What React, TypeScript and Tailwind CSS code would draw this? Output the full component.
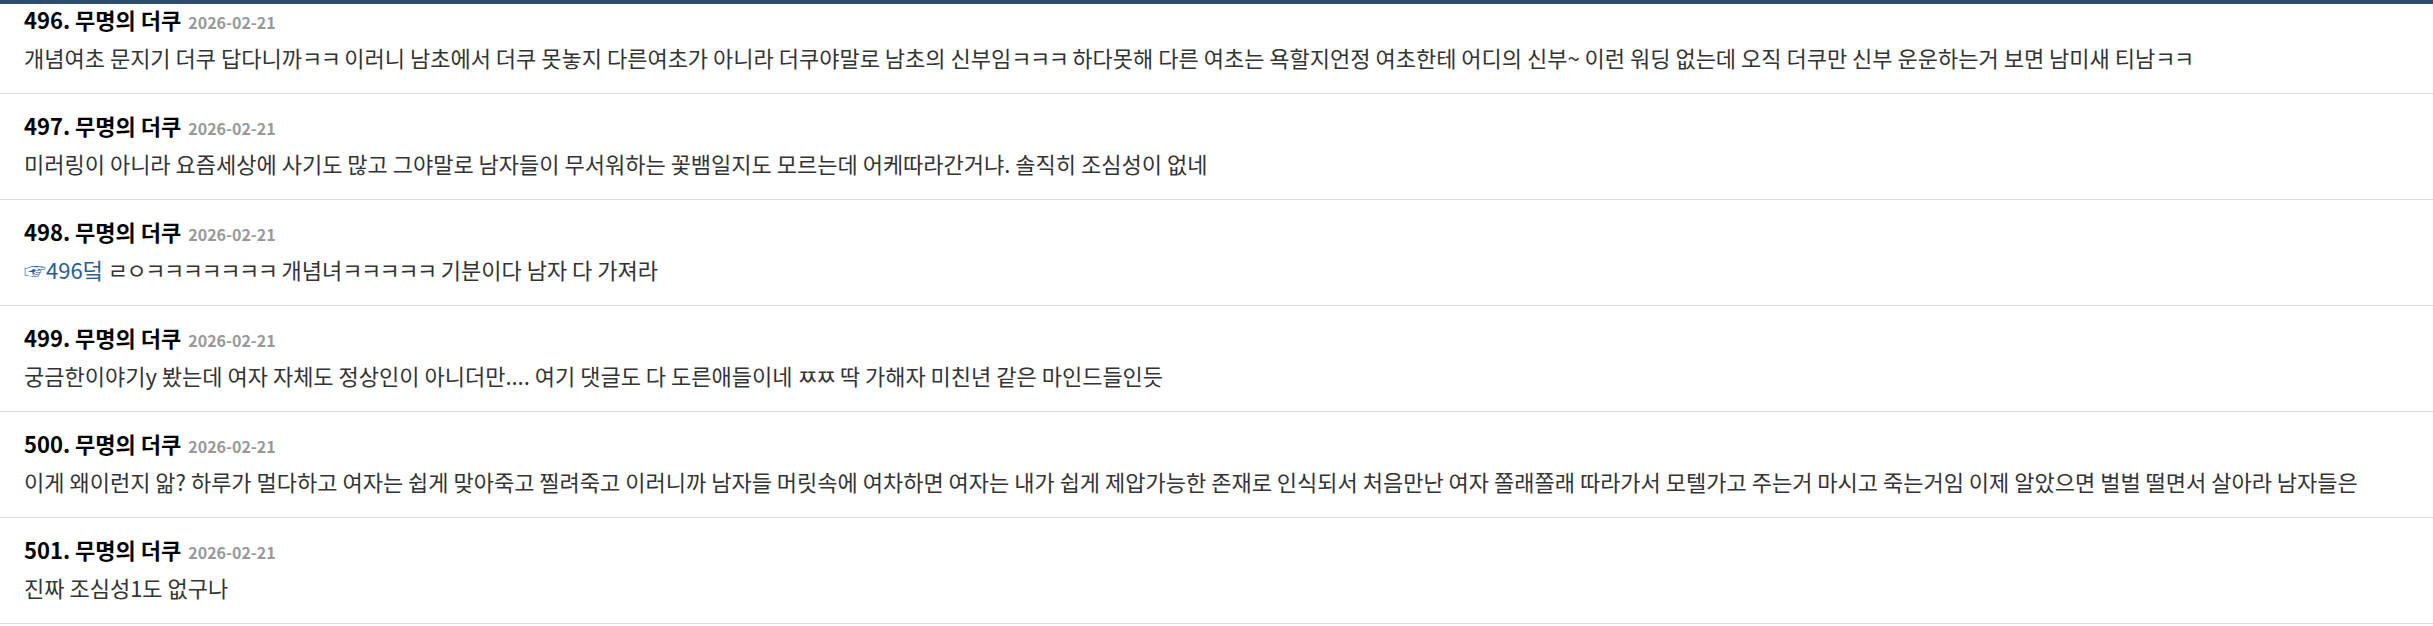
import React from "react";

type Comment = {
  no: number;
  date: string;
  ref?: string;
  body: string;
};

const comments: Comment[] = [
  {
    no: 496,
    date: "2026-02-21",
    body: "개념여초 문지기 더쿠 답다니까ㅋㅋ 이러니 남초에서 더쿠 못놓지 다른여초가 아니라 더쿠야말로 남초의 신부임ㅋㅋㅋ 하다못해 다른 여초는 욕할지언정 여초한테 어디의 신부~ 이런 워딩 없는데 오직 더쿠만 신부 운운하는거 보면 남미새 티남ㅋㅋ",
  },
  {
    no: 497,
    date: "2026-02-21",
    body: "미러링이 아니라 요즘세상에 사기도 많고 그야말로 남자들이 무서워하는 꽃뱀일지도 모르는데 어케따라간거냐. 솔직히 조심성이 없네",
  },
  {
    no: 498,
    date: "2026-02-21",
    ref: "☞496덬",
    body: " ㄹㅇㅋㅋㅋㅋㅋㅋㅋ 개념녀ㅋㅋㅋㅋㅋ 기분이다 남자 다 가져라",
  },
  {
    no: 499,
    date: "2026-02-21",
    body: "궁금한이야기y 봤는데 여자 자체도 정상인이 아니더만.... 여기 댓글도 다 도른애들이네 ㅉㅉ 딱 가해자 미친년 같은 마인드들인듯",
  },
  {
    no: 500,
    date: "2026-02-21",
    body: "이게 왜이런지 앎? 하루가 멀다하고 여자는 쉽게 맞아죽고 찔려죽고 이러니까 남자들 머릿속에 여차하면 여자는 내가 쉽게 제압가능한 존재로 인식되서 처음만난 여자 쫄래쫄래 따라가서 모텔가고 주는거 마시고 죽는거임 이제 알았으면 벌벌 떨면서 살아라 남자들은",
  },
  {
    no: 501,
    date: "2026-02-21",
    body: "진짜 조심성1도 없구나",
  },
];

// lone jamo (ㅋㅋ, ㄹㅇ) are set a little narrower than full hangul in the original font
function Body({ text }: { text: string }) {
  const parts = text.split(/([\u3131-\u318e]+)/);
  return (
    <>
      {parts.map((p, i) =>
        /^[\u3131-\u318e]+$/.test(p) ? (
          <span key={i} className="tracking-[-1.5px]">
            {p}
          </span>
        ) : (
          <React.Fragment key={i}>{p}</React.Fragment>
        )
      )}
    </>
  );
}

function CommentRow({ c, first }: { c: Comment; first: boolean }) {
  return (
    <li
      className={`border-b border-[#dddddd] px-6 pb-[22px] ${first ? "pt-[1px]" : "pt-[17px]"}`}
    >
      <div className="flex h-[28px] items-baseline gap-[7px] leading-[28px]">
        <span className="text-[22px] font-bold text-black">
          {c.no}. 무명의 더쿠
        </span>
        <span className="text-[16px] font-bold text-[#999999]">{c.date}</span>
      </div>
      <p className="mt-[10px] h-[28px] whitespace-nowrap text-[22px] leading-[28px] text-[#333333]">
        {c.ref && <span className="text-[#2b5d92]">{c.ref}</span>}
        <Body text={c.body} />
      </p>
    </li>
  );
}

export default function App() {
  return (
    <div
      className="min-h-screen w-full bg-white"
      style={{ fontFamily: '"Noto Sans CJK KR", "Noto Sans", sans-serif' }}
    >
      <div className="h-1 w-full bg-[#2c4d6e]" />
      <ul>
        {comments.map((c, i) => (
          <CommentRow key={c.no} c={c} first={i === 0} />
        ))}
      </ul>
    </div>
  );
}
